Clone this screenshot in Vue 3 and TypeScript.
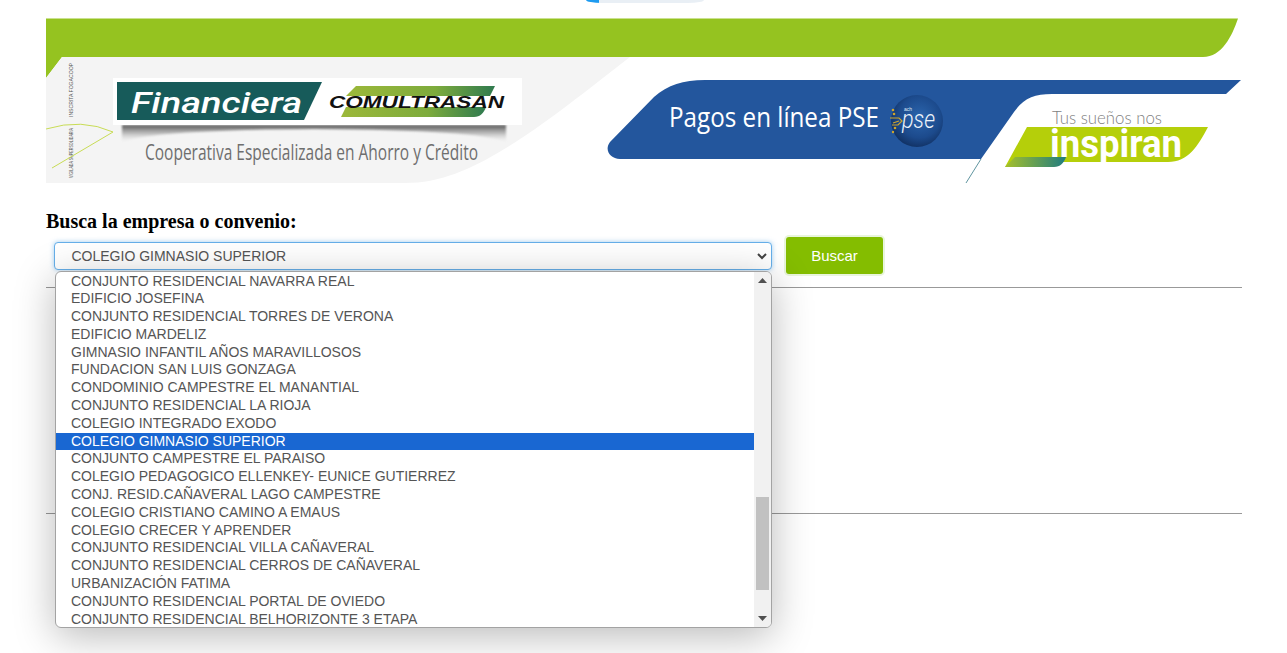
<script setup lang="ts">
const selected = 'COLEGIO GIMNASIO SUPERIOR'

const options: string[] = [
  'CONJUNTO RESIDENCIAL NAVARRA REAL',
  'EDIFICIO JOSEFINA',
  'CONJUNTO RESIDENCIAL TORRES DE VERONA',
  'EDIFICIO MARDELIZ',
  'GIMNASIO INFANTIL AÑOS MARAVILLOSOS',
  'FUNDACION SAN LUIS GONZAGA',
  'CONDOMINIO CAMPESTRE EL MANANTIAL',
  'CONJUNTO RESIDENCIAL LA RIOJA',
  'COLEGIO INTEGRADO EXODO',
  'COLEGIO GIMNASIO SUPERIOR',
  'CONJUNTO CAMPESTRE EL PARAISO',
  'COLEGIO PEDAGOGICO ELLENKEY- EUNICE GUTIERREZ',
  'CONJ. RESID.CAÑAVERAL LAGO CAMPESTRE',
  'COLEGIO CRISTIANO CAMINO A EMAUS',
  'COLEGIO CRECER Y APRENDER',
  'CONJUNTO RESIDENCIAL VILLA CAÑAVERAL',
  'CONJUNTO RESIDENCIAL CERROS DE CAÑAVERAL',
  'URBANIZACIÓN FATIMA',
  'CONJUNTO RESIDENCIAL PORTAL DE OVIEDO',
  'CONJUNTO RESIDENCIAL BELHORIZONTE 3 ETAPA',
]
</script>

<template>
  <div class="page">
    <div class="top-sliver"></div>

    <!-- banner: coordinates in the viewBox are page pixels -->
    <svg class="banner" viewBox="46 18 1196 166" width="1196" height="166">
      <defs>
        <linearGradient id="swoosh" x1="0" x2="1" y1="0" y2="0">
          <stop offset="0" stop-color="#9cb83a" />
          <stop offset="0.6" stop-color="#7dab3c" />
          <stop offset="1" stop-color="#2f7a4f" />
        </linearGradient>
        <linearGradient id="tail" x1="0" x2="1" y1="0" y2="0">
          <stop offset="0" stop-color="#a6c02a" />
          <stop offset="1" stop-color="#1f7c80" />
        </linearGradient>
        <linearGradient id="under" x1="0" x2="0" y1="0" y2="1">
          <stop offset="0" stop-color="#555" />
          <stop offset="0.45" stop-color="#9a9a9a" stop-opacity="0.7" />
          <stop offset="1" stop-color="#ddd" stop-opacity="0" />
        </linearGradient>
        <radialGradient id="globe" cx="0.55" cy="0.42" r="0.62">
          <stop offset="0" stop-color="#2b65ad" />
          <stop offset="0.65" stop-color="#1c4a8c" />
          <stop offset="1" stop-color="#102f60" />
        </radialGradient>
        <filter id="soft" x="-10%" y="-60%" width="120%" height="220%">
          <feGaussianBlur stdDeviation="1.2" />
        </filter>
      </defs>

      <path d="M46 18.5H1238C1232 36 1222 57 1203 57H62L46 78Z" fill="#95c320" />
      <path d="M46 78L62 57H630C590 88 540 128 506 148C470 170 440 183 405 183H46Z" fill="#f4f4f4" />

      <text class="fine" transform="translate(73 117) rotate(-90)" textLength="54" lengthAdjust="spacingAndGlyphs">INSCRITA FOGACOOP</text>
      <text class="fine" transform="translate(73 178) rotate(-90)" textLength="50" lengthAdjust="spacingAndGlyphs">VIGILADA SUPERSOLIDARIA</text>
      <path d="M46 129Q82 118 113 132L52 168" fill="none" stroke="#c8dc55" stroke-width="1" />

      <path d="M122 125H506V142Q480 130 314 129Q150 130 122 142Z" fill="url(#under)" filter="url(#soft)" />
      <rect x="113" y="78" width="409" height="47" fill="#fff" />
      <path d="M117 82H322L304 120H117Z" fill="#175b5a" />
      <text class="fin" x="131" y="113" textLength="171" lengthAdjust="spacingAndGlyphs">Financiera</text>
      <path d="M356 86H495L490 96H346Z" fill="url(#swoosh)" />
      <path d="M346 107H486C484 113 480 117 474 117H341Z" fill="url(#swoosh)" />
      <text class="comu" x="329" y="108" textLength="175" lengthAdjust="spacingAndGlyphs">COMULTRASAN</text>
      <text class="coop" x="145" y="160" textLength="333" lengthAdjust="spacingAndGlyphs">Cooperativa Especializada en Ahorro y Crédito</text>

      <path d="M981 159L966 183" stroke="#5f95a0" stroke-width="1" fill="none" />
      <path d="M705 80H1241L1226 94H1052C1034 94 1024 98 1014 112L981 159H620C610 159 604 150 610 142L654 97C668 85 683 80 705 80Z" fill="#23569d" />
      <text class="pagos" x="669" y="127" textLength="210" lengthAdjust="spacingAndGlyphs">Pagos en línea PSE</text>
      <circle cx="917" cy="121" r="26" fill="url(#globe)" />
      <g fill="none" stroke="#d0a52c" stroke-width="1.2">
        <path d="M890 118H899L902 121L898 125H892" />
        <path d="M893 123L899 121" />
      </g>
      <g fill="#d0a52c">
        <circle cx="893" cy="110" r="1.3" />
        <circle cx="894" cy="114" r="1.3" />
        <circle cx="895" cy="128" r="1.3" />
        <circle cx="893" cy="132" r="1.2" />
      </g>
      <text class="ach" x="904" y="111">ach</text>
      <text class="pse" x="902" y="128" textLength="33" lengthAdjust="spacingAndGlyphs">pse</text>

      <path d="M1027 127H1208C1198 146 1188 162 1168 162H1060L1005 167Z" fill="#b5cf0a" />
      <path d="M1005 167L1015 157H1066C1064 163 1060 167 1054 167Z" fill="url(#tail)" />
      <text class="tus" x="1052" y="124" textLength="110" lengthAdjust="spacingAndGlyphs">Tus sueños nos</text>
      <text class="insp" x="1050" y="157" textLength="132" lengthAdjust="spacingAndGlyphs">inspiran</text>
    </svg>

    <h3 class="search-title">Busca la empresa o convenio:</h3>

    <div class="search-row">
      <div class="select-wrap">
        <div class="select-box">
          <span>{{ selected }}</span>
          <svg class="chevron" width="10" height="7" viewBox="0 0 10 7">
            <path d="M1 1L5 5L9 1" fill="none" stroke="#444" stroke-width="2" />
          </svg>
        </div>

        <!-- open dropdown -->
        <div class="dropdown">
          <ul class="option-list">
            <li
              v-for="opt in options"
              :key="opt"
              class="option"
              :class="{ active: opt === selected }"
            >{{ opt }}</li>
          </ul>
          <div class="scrollbar">
            <svg class="arrow" width="9" height="5" viewBox="0 0 9 5"><path d="M4.5 0L9 5H0Z" fill="#505050" /></svg>
            <div class="track"><div class="thumb"></div></div>
            <svg class="arrow" width="9" height="5" viewBox="0 0 9 5"><path d="M0 0H9L4.5 5Z" fill="#505050" /></svg>
          </div>
        </div>
      </div>
      <button class="search-btn" type="button">Buscar</button>
    </div>

    <hr class="rule" />
    <div class="results"></div>
    <hr class="rule" />
  </div>
</template>

<style scoped>
.page {
  position: relative;
  height: 653px;
  box-sizing: border-box;
  padding: 18px 45px 0 46px;
  overflow: hidden;
  background: #fff;
  font-family: "Liberation Sans", Arial, sans-serif;
}

.top-sliver {
  position: absolute;
  top: 0;
  left: 586px;
  width: 118px;
  height: 3px;
  border-radius: 0 0 16px 16px / 0 0 3px 3px;
  background: linear-gradient(90deg, #1e9bf0 13px, #e9eff5 13px);
}

.banner {
  display: block;
}

.fine {
  font-family: "Liberation Sans", sans-serif;
  font-size: 5px;
  fill: #555;
}

.fin {
  font-family: Roboto, sans-serif;
  font-size: 30px;
  font-weight: 500;
  font-style: italic;
  fill: #fff;
}

.comu {
  font-family: "Liberation Sans", sans-serif;
  font-size: 17px;
  font-weight: 700;
  font-style: italic;
  fill: #111;
}

.coop {
  font-family: "Open Sans", sans-serif;
  font-size: 22px;
  fill: #6e6e6e;
}

.pagos {
  font-family: "Open Sans", sans-serif;
  font-size: 27px;
  fill: #fff;
}

.ach {
  font-family: "Liberation Sans", sans-serif;
  font-size: 5px;
  fill: #dfe8f4;
}

.pse {
  font-family: Roboto, sans-serif;
  font-size: 25px;
  font-weight: 300;
  font-style: italic;
  fill: #eef3fa;
}

.tus {
  font-family: Lato, sans-serif;
  font-size: 18px;
  font-weight: 300;
  fill: #7f7f7f;
}

.insp {
  font-family: Roboto, sans-serif;
  font-size: 38px;
  font-weight: 700;
  fill: #fff;
}

.search-title {
  margin: 27px 0 0;
  font-family: "Liberation Serif", "Times New Roman", serif;
  font-size: 20px;
  line-height: 20px;
  font-weight: 700;
  color: #000;
}

.search-row {
  display: flex;
  align-items: flex-start;
  gap: 14px;
  margin-top: 6px;
  padding-left: 8px;
}

.select-wrap {
  position: relative;
  width: 718px;
  margin-top: 5px;
}

.select-box {
  box-sizing: border-box;
  display: flex;
  align-items: center;
  justify-content: space-between;
  height: 28px;
  padding: 0 4px 0 16.5px;
  border: 1px solid #66afe9;
  border-radius: 4px;
  background: #fff;
  box-shadow: 0 0 5px rgba(102, 175, 233, 0.6);
  font-size: 14px;
  color: #555;
}

.dropdown {
  position: absolute;
  top: 28.5px;
  left: 0.5px;
  right: 0;
  height: 357.5px;
  box-sizing: border-box;
  display: flex;
  overflow: hidden;
  background: #fff;
  border: 1px solid #a3a3a3;
  border-radius: 6px;
  box-shadow: 0 8px 40px rgba(0, 0, 0, 0.28);
  z-index: 5;
}

.option-list {
  flex: 1;
  margin: 0;
  padding: 1px 0 0;
  list-style: none;
  overflow: hidden;
}

.option {
  height: 17.8px;
  line-height: 17.8px;
  padding-left: 15.5px;
  font-size: 14px;
  color: #555;
  white-space: nowrap;
}

.option.active {
  background: #1967d2;
  color: #fff;
}

.scrollbar {
  width: 17px;
  display: flex;
  flex-direction: column;
  align-items: center;
  background: #f1f1f1;
}

.arrow {
  flex: none;
  margin: 6px 0;
}

.track {
  flex: 1;
  width: 100%;
  position: relative;
}

.thumb {
  position: absolute;
  top: 208px;
  left: 2px;
  right: 2px;
  height: 93px;
  background: #c1c1c1;
}

.search-btn {
  box-sizing: border-box;
  width: 97px;
  height: 37px;
  margin: 0;
  padding: 0;
  border: none;
  border-radius: 3px;
  background: #84bd00;
  box-shadow: 0 0 0 2px #e9f5dc;
  font-family: inherit;
  font-size: 15px;
  color: #fff;
}

.rule {
  margin: 13px 0 0;
  border: none;
  border-top: 1px solid #999;
}

.results {
  height: 225px;
}

.rule + .results + .rule {
  margin-top: 0;
}
</style>

<style>
html,
body {
  margin: 0;
  overflow: hidden;
}
</style>
